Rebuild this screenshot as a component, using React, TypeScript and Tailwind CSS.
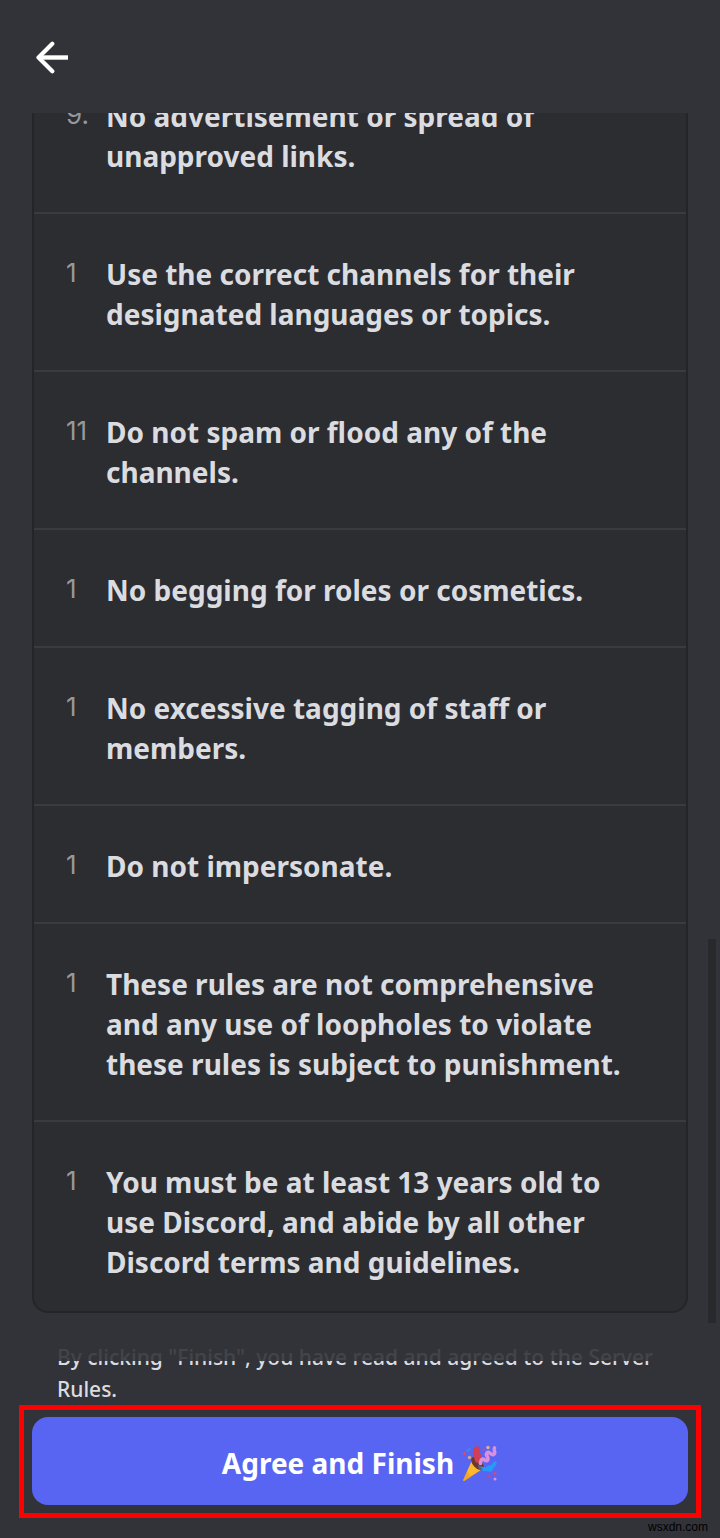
type Rule = {
  marker: string
  lines: string[]
}

const rules: Rule[] = [
  { marker: '9.', lines: ['No advertisement or spread of', 'unapproved links.'] },
  { marker: '1', lines: ['Use the correct channels for their', 'designated languages or topics.'] },
  { marker: '11', lines: ['Do not spam or flood any of the', 'channels.'] },
  { marker: '1', lines: ['No begging for roles or cosmetics.'] },
  { marker: '1', lines: ['No excessive tagging of staff or', 'members.'] },
  { marker: '1', lines: ['Do not impersonate.'] },
  {
    marker: '1',
    lines: ['These rules are not comprehensive', 'and any use of loopholes to violate', 'these rules is subject to punishment.'],
  },
  {
    marker: '1',
    lines: ['You must be at least 13 years old to', 'use Discord, and abide by all other', 'Discord terms and guidelines.'],
  },
]

const BackArrow = () => (
  <svg viewBox="0 0 34 34" className="h-[34px] w-[34px]" fill="none" stroke="#ffffff" aria-hidden="true">
    <path d="M33 17.5H5" strokeWidth="4.4" />
    <path d="M17.3 3.7L3.5 17.5l13.8 13.8" strokeWidth="4.2" strokeLinejoin="round" strokeLinecap="round" />
  </svg>
)

const PartyPopper = () => (
  <svg viewBox="0 0 36 36" className="h-9 w-9" fill="none" aria-hidden="true">
    <path d="M1 35.5L10.5 14c3-1.5 11 6.5 10 10L2 36z" fill="#ffb72b" />
    <path d="M1 35.5l4-9 4 5.5-7 4z" fill="#f29a1f" opacity=".6" />
    <ellipse cx="15.5" cy="18.5" rx="8" ry="4.5" transform="rotate(47 15.5 18.5)" fill="#6b3a2c" />
    <path d="M13.5 17C12 12 8.5 6 13 2c3-2 5.5 0 4.5 3-1 3 2.5 4 2 7-.5 3-2.5 3-1.5 7z" fill="#cf3f55" />
    <path
      d="M18.5 18.5c0-4 2-5 3.5-4 2 1.5 3.5 2 4-.5.5-2.5-3-3.5-1-6 2-2.3 4 2.500 6.500 1.500 3-1.500-.5-5 1-6.500"
      stroke="#dc8fdc"
      strokeWidth="3.6"
      strokeLinecap="round"
    />
    <path d="M17 22c4-2 5 2 8-.5 3-2.5 4 0 5.500-3 1-2.500 2.500-3 4-1.500 1 3-2 4-3 6.500-2 4.500-5 3.500-7 2.500-2 1-5 0-7.500-4z" fill="#249bf5" />
    <path d="M16 19l5 5.500-4 .5z" fill="#4d6c91" />
    <path d="M4 6l4-3.500.5 1.500-3 3z" fill="#249bf5" />
    <circle cx="2.5" cy="8.5" r="1.8" fill="#cf4c74" />
    <circle cx="7.5" cy="12.5" r="1.7" fill="#d6a487" />
    <circle cx="26" cy="2.5" r="1.7" fill="#d6b3a0" />
    <circle cx="21.5" cy="4.5" r="1.2" fill="#cf4c74" />
    <circle cx="26.5" cy="31.5" r="1.8" fill="#c04790" />
    <circle cx="33" cy="28.5" r="1.6" fill="#cf4c74" />
    <circle cx="33" cy="34" r="1.5" fill="#dc8fdc" />
  </svg>
)

const RuleItem = ({ marker, lines }: Rule) => (
  <li className="flex border-b-2 border-[#3a3b40] pt-10 pr-4 pb-9 pl-8 last:border-b-0 last:pb-[29px]">
    <span className="w-10 shrink-0 font-['Inter',sans-serif] text-[26px] leading-[38px] text-[#96989d]">{marker}</span>
    <p className="text-[28px] leading-10 font-bold whitespace-nowrap text-[#dbdce0]">
      {lines.map((line) => (
        <span key={line} className="block">
          {line}
        </span>
      ))}
    </p>
  </li>
)

export default function App() {
  return (
    <div className="flex min-h-screen flex-col bg-[#323338] font-['Noto_Sans',sans-serif]">
      <header className="flex h-[113px] items-center px-[35px]">
        <button type="button" aria-label="Back">
          <BackArrow />
        </button>
      </header>

      <main className="relative px-8">
        <div className="overflow-hidden">
          <ol className="-mt-[59px] rounded-2xl border-2 border-[#242529] bg-[#2c2d31]">
            {rules.map((rule) => (
              <RuleItem key={rule.lines[0]} {...rule} />
            ))}
          </ol>
        </div>
        {/* scroll thumb */}
        <div className="absolute right-1 -bottom-2.5 h-96 w-2 bg-[#28292d]" />
      </main>

      <footer className="mt-7">
        <div className="relative px-[57px]">
          <p className="text-[21px] leading-8 font-medium text-[#dbdce0]">
            By clicking "Finish", you have read and agreed to the Server Rules.
          </p>
          <div className="absolute inset-x-0 top-0 h-5 bg-[#323338]/90" />
        </div>
        <div className="mx-[19px] border-5 border-[#ff0000] px-2 pt-[7px] pb-2">
          <button
            type="button"
            className="flex h-[88px] w-full items-center justify-center gap-2 rounded-2xl bg-[#5865f2] pt-1 text-[28px] font-bold text-white"
          >
            Agree and Finish
            <PartyPopper />
          </button>
        </div>
        <p className="pr-3 text-right font-['Liberation_Sans',sans-serif] text-xs leading-[18px] text-black">wsxdn.com</p>
      </footer>
    </div>
  )
}
